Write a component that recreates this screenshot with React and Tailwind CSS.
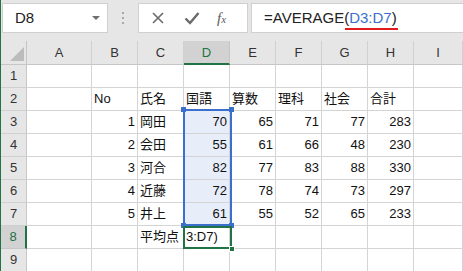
import React from "react";

const font = "font-['Liberation_Sans','Noto_Sans_CJK_JP',sans-serif]";

const cols = ["A", "B", "C", "D", "E", "F", "G", "H", "I"];

const rows = [
  [],
  ["", "No", "氏名", "国語", "算数", "理科", "社会", "合計"],
  ["", 1, "岡田", 70, 65, 71, 77, 283],
  ["", 2, "会田", 55, 61, 66, 48, 230],
  ["", 3, "河合", 82, 77, 83, 88, 330],
  ["", 4, "近藤", 72, 78, 74, 73, 297],
  ["", 5, "井上", 61, 55, 52, 65, 233],
  ["", "", "平均点", "3:D7)"],
  [],
];

const Handle = ({ className }) => (
  <div className={"absolute w-[5px] h-[5px] " + className} />
);

const FormulaBar = () => (
  <div className="h-[41px] bg-[#e6e6e6] flex items-start pt-[3px] pl-[1px]">
    {/* Name box */}
    <div className="w-[106px] h-[30px] bg-white border border-[#d0d0d0] flex items-center justify-between pl-[12px] pr-[7px]">
      <span className="text-[15px] text-[#222]">D8</span>
      <svg width="8" height="5" viewBox="0 0 8 5">
        <polygon points="0,0 8,0 4,4" fill="#6e6e6e" />
      </svg>
    </div>
    <div className="w-[30px] h-[30px] flex flex-col items-center justify-center gap-[3px]">
      <div className="w-[2px] h-[2px] bg-[#a8a8a8]" />
      <div className="w-[2px] h-[2px] bg-[#a8a8a8]" />
      <div className="w-[2px] h-[2px] bg-[#a8a8a8]" />
    </div>
    {/* Cancel / enter / fx */}
    <div className="w-[110px] h-[30px] bg-white border border-[#d0d0d0] flex items-center">
      <svg width="14" height="14" viewBox="0 0 14 14" className="ml-[12px]">
        <path d="M2 2 L12 12 M12 2 L2 12" stroke="#6a6a6a" strokeWidth="1.6" />
      </svg>
      <svg width="16" height="14" viewBox="0 0 16 14" className="ml-[19px]">
        <path d="M1.5 7.5 L6 12 L14.5 2" stroke="#6a6a6a" strokeWidth="2.4" fill="none" />
      </svg>
      <span className="ml-[17px] font-['Liberation_Serif',serif] italic text-[#5a5a5a] text-[15px] leading-none">
        f<span className="text-[11px]">x</span>
      </span>
    </div>
    <div className="ml-[3px] flex-1 h-[30px] bg-white border border-[#d0d0d0] border-r-0 flex items-center pl-[12px]">
      <span className="text-[15px] text-[#222] relative">
        =AVERAGE
        <span className="relative">
          (<span className="text-[#3a6fcb]">D3:D7</span>)
          <span className="absolute left-[1px] right-[-1px] bottom-[-4px] h-[2px] bg-[#e01b1b]" />
        </span>
      </span>
    </div>
  </div>
);

const App = () => {
  return (
    <div className={"w-[463px] h-[271px] overflow-hidden bg-white border-l border-[#217346] " + font}>
      <FormulaBar />
      <div className="relative grid grid-cols-[26px_65px_46px_46px_46px_46px_46px_46px_46px_1fr] text-[13px] text-[#111]">
        {/* Column headers */}
        <div className="h-[24px] bg-[#e6e6e6] border-r border-b border-[#c6c6c6] relative">
          <svg width="14" height="14" viewBox="0 0 14 14" className="absolute left-[9px] top-[6px]">
            <polygon points="14,0 14,14 0,14" fill="#bcbcbc" />
          </svg>
        </div>
        {cols.map((c) => (
          <div
            key={c}
            className={
              c === "D"
                ? "h-[24px] bg-[#d2d2d2] border-r border-[#c6c6c6] border-b-2 border-b-[#217346] flex items-center justify-center text-[#217346] pt-[1px]"
                : "h-[24px] bg-[#e6e6e6] border-r border-b border-[#d0d0d0] border-b-[#c6c6c6] flex items-center justify-center text-[#333]"
            }
          >
            {c}
          </div>
        ))}

        {/* Rows */}
        {rows.map((r, i) => {
          const n = i + 1;
          const sel = n === 8;
          return (
            <React.Fragment key={n}>
              <div
                className={
                  sel
                    ? "h-[23px] bg-[#d2d2d2] border-r-2 border-r-[#217346] border-b border-[#c6c6c6] flex items-center justify-center text-[#217346]"
                    : "h-[23px] bg-[#e6e6e6] border-r border-b border-[#c6c6c6] border-b-[#d0d0d0] flex items-center justify-center text-[#333]"
                }
              >
                {n}
              </div>
              {cols.map((c, j) => {
                const v = r[j];
                const isNum = typeof v === "number";
                const hl = c === "D" && n >= 3 && n <= 7;
                return (
                  <div
                    key={c}
                    className={
                      "h-[23px] border-r border-b border-[#d4d4d4] flex items-center px-[2px] whitespace-nowrap overflow-hidden " +
                      (isNum ? "justify-end " : "justify-start ") +
                      (hl ? "bg-[#e8eef9]" : "bg-white")
                    }
                  >
                    {v}
                  </div>
                );
              })}
            </React.Fragment>
          );
        })}

        {/* Range highlight D3:D7 */}
        <div className="absolute left-[182px] top-[68px] w-[49px] h-[117px] border-2 border-[#3a6fcb] pointer-events-none" />
        <Handle className="left-[180px] top-[66px] bg-[#3a6fcb]" />
        <Handle className="left-[228px] top-[66px] bg-[#3a6fcb]" />
        <Handle className="left-[180px] top-[182px] bg-[#3a6fcb]" />
        <Handle className="left-[228px] top-[182px] bg-[#3a6fcb]" />

        {/* Active cell D8 */}
        <div className="absolute left-[182px] top-[185px] w-[49px] h-[23px] border-2 border-[#217346] pointer-events-none" />
        <Handle className="left-[228px] top-[205px] bg-[#217346] border border-white w-[6px] h-[6px]" />
      </div>
    </div>
  );
};

export default App;
